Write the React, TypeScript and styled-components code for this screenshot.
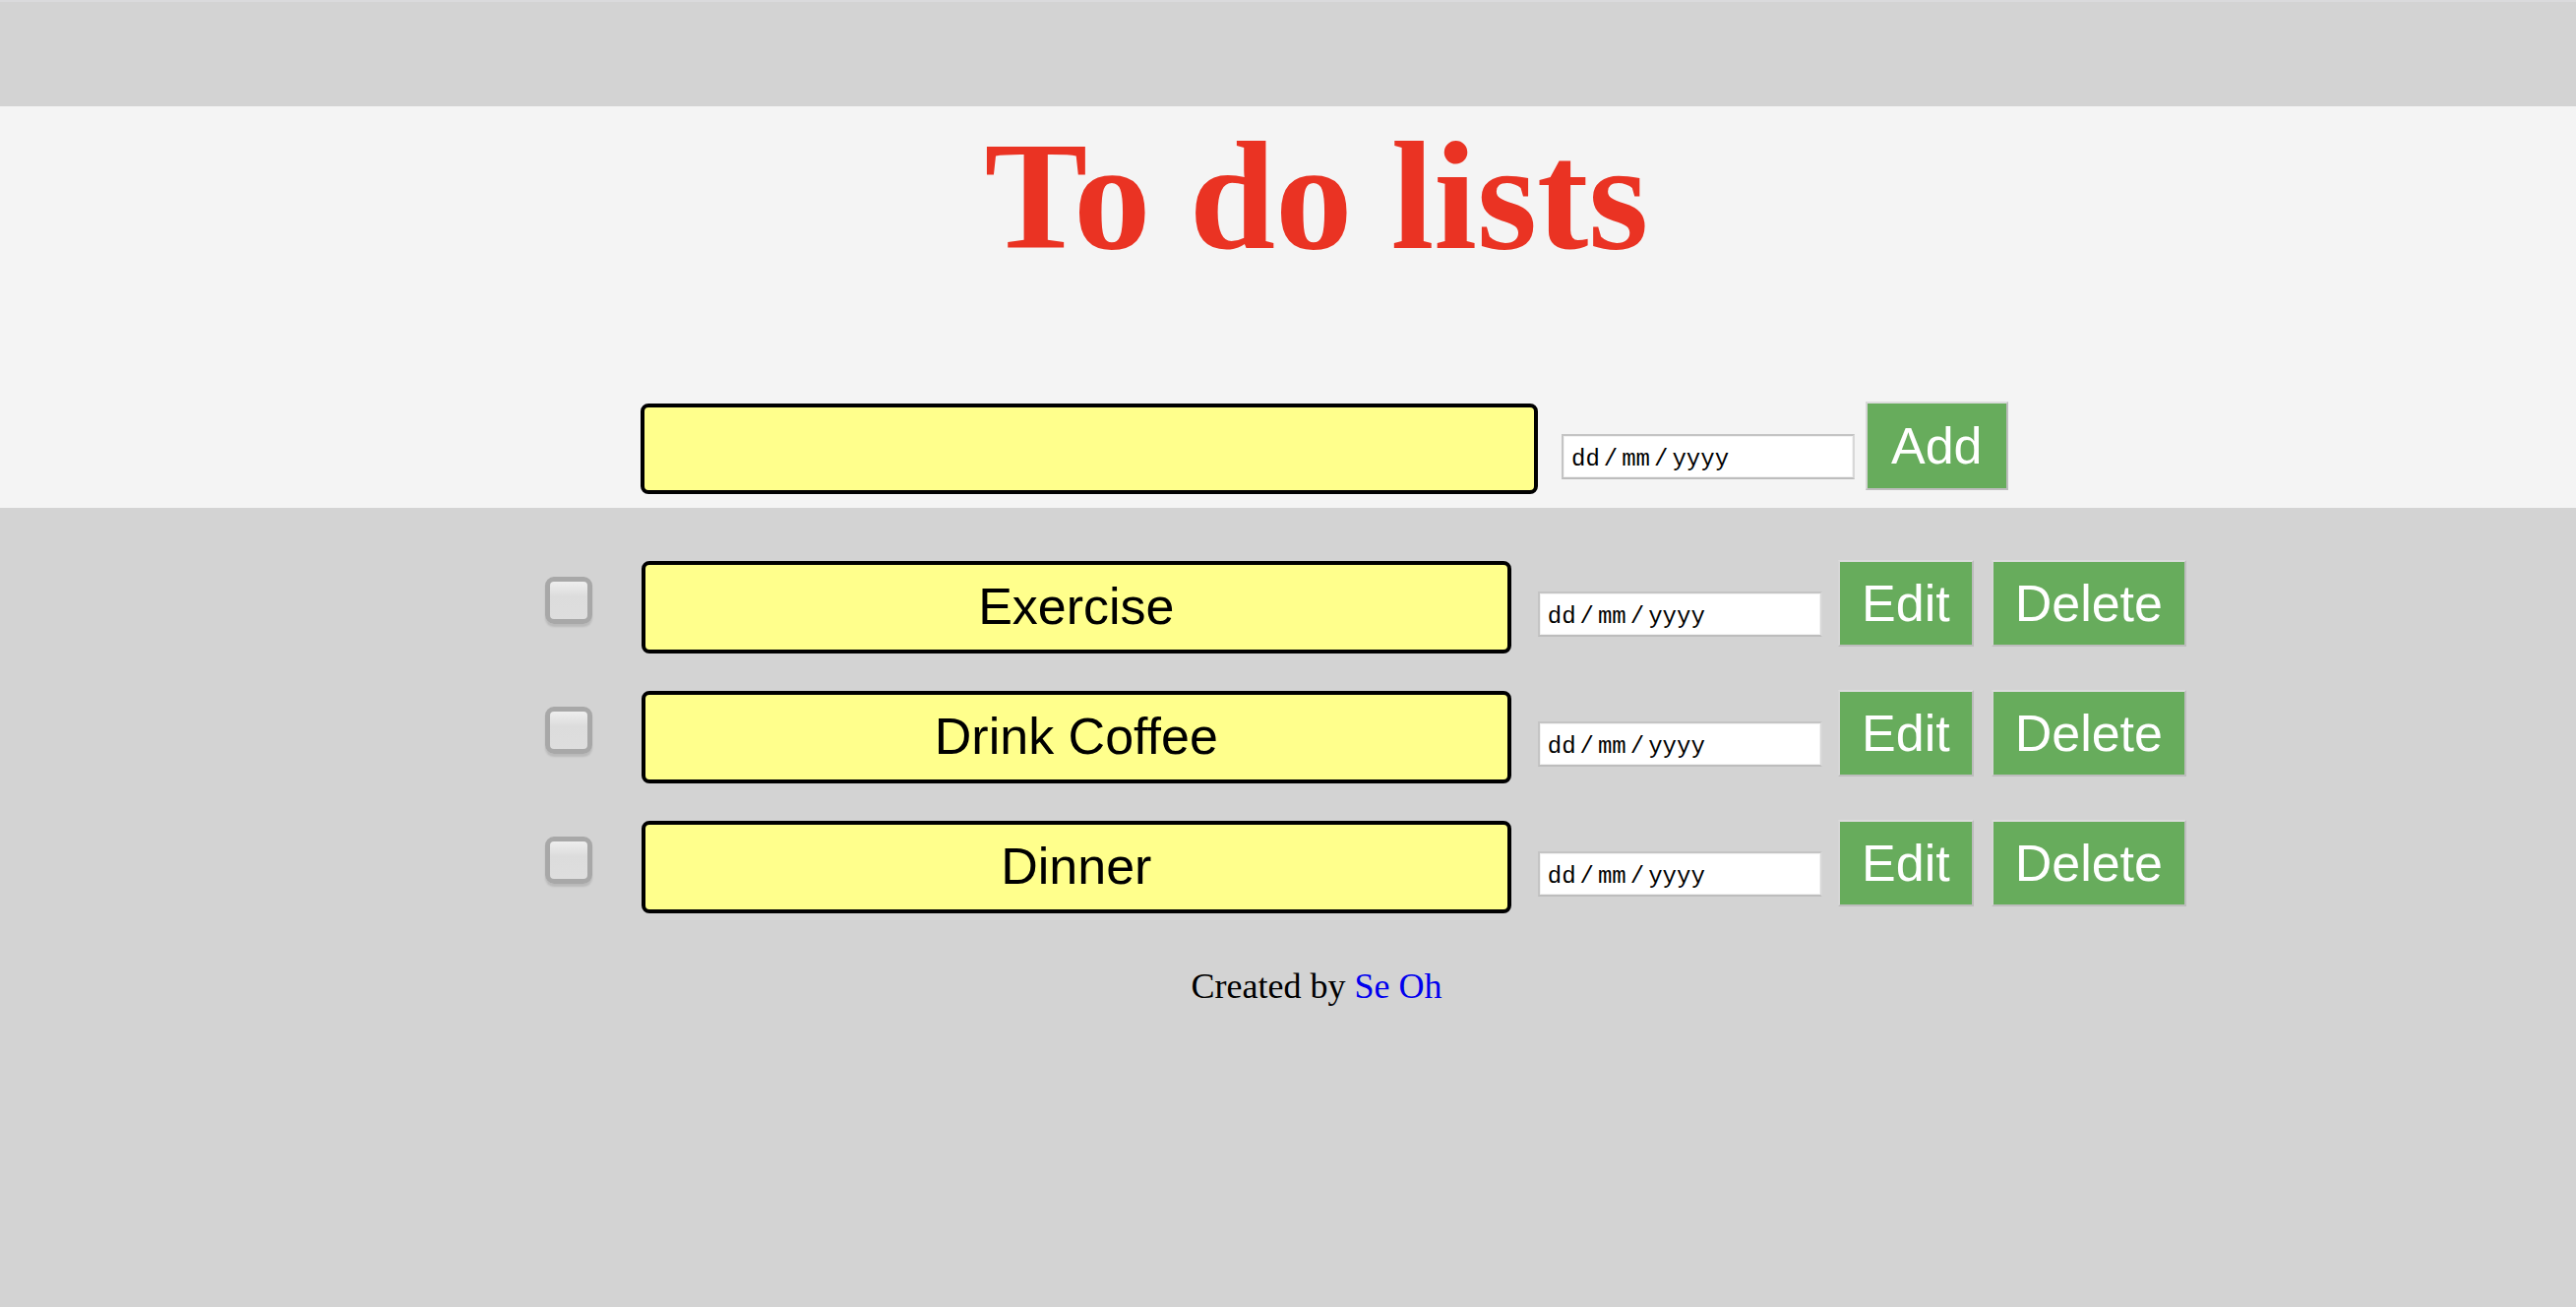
import React from "react";
import styled, { createGlobalStyle } from "styled-components";

const GlobalStyle = createGlobalStyle`
  html, body {
    margin: 0;
    padding: 0;
    background: #d3d3d3;
  }
  * { box-sizing: border-box; }
`;

const Page = styled.div`
  min-height: 100vh;
  border-top: 2px solid #dadadc;
  background: #d3d3d3;
`;

const TopBar = styled.div`
  height: 106px;
  background: #d3d3d3;
`;

const Hero = styled.header`
  background: #f4f4f4;
  padding: 14px 0 14px;
`;

const Title = styled.h1`
  margin: 0;
  padding-left: 58px;
  text-align: center;
  font-family: "Liberation Serif", "Times New Roman", serif;
  font-weight: 700;
  font-size: 157px;
  line-height: 155px;
  color: #ea3323;
`;

const Container = styled.div`
  box-sizing: content-box;
  width: 1668px;
  margin: 0 auto;
  padding-left: 158px;
`;

const InputRow = styled.div`
  display: flex;
  align-items: flex-start;
  margin-top: 131px;
  padding-left: 97px;
`;

const TaskInput = styled.input`
  width: 912px;
  height: 92px;
  margin-top: 2px;
  margin-right: 24px;
  background: #ffff8c;
  border: 4px solid #000;
  border-radius: 8px;
  outline: none;
  font-family: "Liberation Sans", Arial, sans-serif;
  font-size: 52px;
  text-align: center;
`;

const DateBox = styled.div<{ $w: number; $mt: number }>`
  width: ${(p) => p.$w}px;
  height: 46px;
  margin-top: ${(p) => p.$mt}px;
  display: flex;
  align-items: center;
  padding: 5px 0 0 8px;
  background: #fff;
  border: 2px solid;
  border-color: #c4c4c4 #d8d8d8 #bdbdbd #c4c4c4;
  box-shadow: inset 0 0 0 1px #f2f2f2;
  font-family: "Liberation Mono", "Courier New", monospace;
  font-size: 24px;
  color: #000;
`;

const Sep = styled.span`
  margin: 0 4px;
`;

const GreenButton = styled.button<{ $h: number }>`
  height: ${(p) => p.$h}px;
  padding: 0 22px;
  background: #67ac5c;
  color: #fff;
  border: 2px solid;
  border-color: #dcdcdc #bdbdbd #bdbdbd #d6d6d6;
  font-family: "Liberation Sans", Arial, sans-serif;
  font-size: 52px;
  line-height: 1;
  cursor: pointer;
`;

const AddButton = styled(GreenButton)`
  margin-left: 11px;
  padding: 0 24px;
`;

const List = styled.ul`
  list-style: none;
  margin: 0;
  padding: 53px 0 0;
  display: flex;
  flex-direction: column;
  gap: 37px;
`;

const Row = styled.li`
  display: flex;
  align-items: flex-start;
  height: 95px;
`;

const Check = styled.input`
  appearance: none;
  -webkit-appearance: none;
  width: 48px;
  height: 48px;
  margin: 17px 50px 0 0;
  border: 5px solid #a8a8a8;
  border-radius: 9px;
  background: linear-gradient(#eeeeee, #dcdcdc 40%, #dedede);
  box-shadow: 0 3px 2px rgba(0, 0, 0, 0.12);
`;

const ItemText = styled.div`
  width: 886px;
  height: 94px;
  margin-top: 1px;
  margin-right: 27px;
  display: flex;
  align-items: center;
  justify-content: center;
  padding-bottom: 3px;
  background: #ffff8c;
  border: 4px solid #000;
  border-radius: 8px;
  font-family: "Liberation Sans", Arial, sans-serif;
  font-size: 52px;
  color: #000;
`;

const Actions = styled.div`
  display: flex;
  gap: 18px;
  margin-left: 16px;
`;

const Footer = styled.footer`
  margin-top: 53px;
  padding-left: 58px;
  text-align: center;
  font-family: "Liberation Serif", "Times New Roman", serif;
  font-size: 36px;
  color: #000;
`;

const Link = styled.a`
  color: #0000ee;
  text-decoration: none;
`;

const DatePlaceholder = ({ w, mt }: { w: number; mt: number }) => (
  <DateBox $w={w} $mt={mt}>
    <span>dd</span>
    <Sep>/</Sep>
    <span>mm</span>
    <Sep>/</Sep>
    <span>yyyy</span>
  </DateBox>
);

const items = ["Exercise", "Drink Coffee", "Dinner"];

export default function App() {
  return (
    <>
      <GlobalStyle />
      <Page>
        <TopBar />
        <Hero>
          <Title>To do lists</Title>
          <Container>
            <InputRow>
              <TaskInput type="text" aria-label="New task" />
              <DatePlaceholder w={298} mt={33} />
              <AddButton $h={90}>Add</AddButton>
            </InputRow>
          </Container>
        </Hero>
        <Container>
          <List>
            {items.map((t) => (
              <Row key={t}>
                <Check type="checkbox" aria-label={t} />
                <ItemText>{t}</ItemText>
                <DatePlaceholder w={290} mt={32} />
                <Actions>
                  <GreenButton $h={88}>Edit</GreenButton>
                  <GreenButton $h={88}>Delete</GreenButton>
                </Actions>
              </Row>
            ))}
          </List>
        </Container>
        <Footer>
          Created by <Link href="#">Se Oh</Link>
        </Footer>
      </Page>
    </>
  );
}
